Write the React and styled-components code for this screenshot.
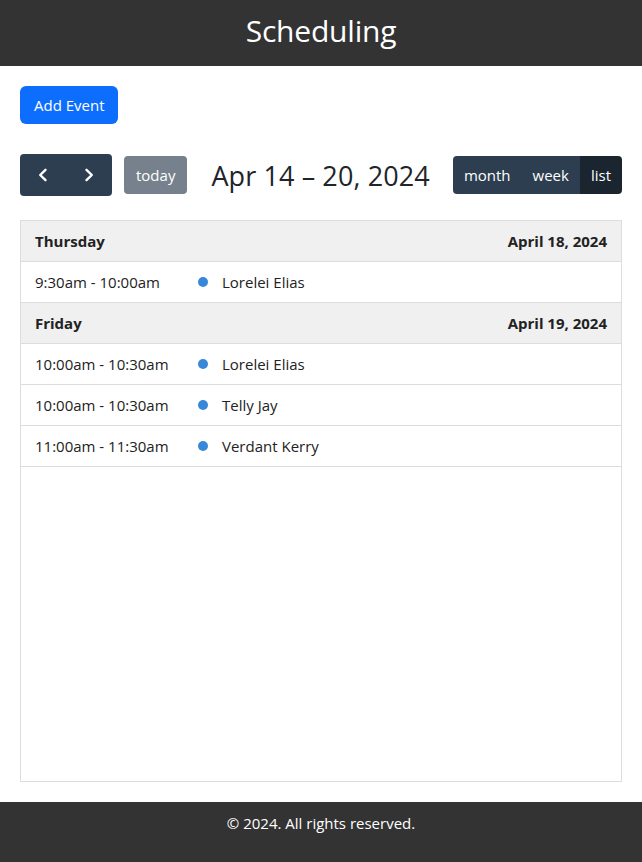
import React from 'react';
import styled, { createGlobalStyle } from 'styled-components';

const GlobalStyle = createGlobalStyle`
  html, body {
    margin: 0;
    padding: 0;
    height: 100%;
  }
  body {
    font-family: 'Open Sans', 'Noto Sans', sans-serif;
    color: #212529;
    background: #fff;
  }
  #root {
    min-height: 100%;
  }
`;

const Page = styled.div`
  display: flex;
  flex-direction: column;
  min-height: 100vh;
`;

const Header = styled.header`
  height: 66px;
  background: #333;
  color: #fff;
  display: flex;
  align-items: center;
  justify-content: center;
`;

const Title = styled.h1`
  margin: 0 0 6px;
  font-size: 30px;
  font-weight: 400;
  letter-spacing: -0.2px;
`;

const Main = styled.main`
  flex: 1;
  display: flex;
  flex-direction: column;
  padding: 20px;
`;

const PrimaryButton = styled.button`
  align-self: flex-start;
  height: 38px;
  padding: 0 13px 1px 14px;
  border: none;
  border-radius: 6px;
  background: #0d6efd;
  color: #fff;
  font-family: inherit;
  font-size: 15px;
`;

const Toolbar = styled.div`
  display: flex;
  align-items: center;
  justify-content: space-between;
  margin-top: 30px;
  margin-bottom: 24px;
`;

const ToolbarChunk = styled.div`
  display: flex;
  align-items: center;
  gap: 12px;
`;

const ButtonGroup = styled.div`
  display: flex;
  border-radius: 4px;
  overflow: hidden;
`;

const CalButton = styled.button`
  height: ${(p) => (p.tall ? '42px' : '38px')};
  padding: 0 ${(p) => (p.tall ? '15px' : '11px')};
  border: none;
  background: ${(p) => (p.active ? '#1a252f' : '#2c3e50')};
  color: #fff;
  font-family: inherit;
  font-size: 15px;
  display: flex;
  align-items: center;
  justify-content: center;
`;

const TodayButton = styled(CalButton)`
  padding: 0 12px;
  background: #76818d;
  border-radius: 4px;
`;

const RangeTitle = styled.h2`
  margin: 0 0 0 12px;
  font-size: 27px;
  font-weight: 400;
  color: #212529;
  letter-spacing: 0.1px;
`;

const List = styled.div`
  flex: 1;
  border: 1px solid #ddd;
`;

const DayRow = styled.div`
  display: flex;
  justify-content: space-between;
  align-items: center;
  height: 40px;
  padding: 0 14px;
  background: #f0f0f0;
  border-bottom: 1px solid #ddd;
  font-weight: 700;
  font-size: 15px;
  color: #222;
`;

const EventRow = styled.div`
  display: flex;
  align-items: center;
  height: 40px;
  padding: 0 14px;
  border-bottom: 1px solid #ddd;
  font-size: 15px;
  color: #222;
`;

const Time = styled.span`
  width: 163px;
`;

const Dot = styled.span`
  width: 10px;
  height: 10px;
  border-radius: 50%;
  background: #3788d8;
  margin-right: 14px;
`;

const Footer = styled.footer`
  height: 60px;
  box-sizing: border-box;
  padding-top: 11px;
  background: #333;
  color: #fff;
  display: flex;
  justify-content: center;
  font-size: 15px;
`;

const Chevron = ({ dir }) => (
  <svg width="16" height="16" viewBox="0 0 16 16" fill="none" stroke="#fff" strokeWidth="2.4" strokeLinecap="round" strokeLinejoin="round">
    {dir === 'left' ? <path d="M10.5 2.8 5.2 8l5.3 5.2" /> : <path d="M5.5 2.8 10.8 8l-5.3 5.2" />}
  </svg>
);

const days = [
  {
    name: 'Thursday',
    date: 'April 18, 2024',
    events: [{ time: '9:30am - 10:00am', title: 'Lorelei Elias' }],
  },
  {
    name: 'Friday',
    date: 'April 19, 2024',
    events: [
      { time: '10:00am - 10:30am', title: 'Lorelei Elias' },
      { time: '10:00am - 10:30am', title: 'Telly Jay' },
      { time: '11:00am - 11:30am', title: 'Verdant Kerry' },
    ],
  },
];

const App = () => {
  return (
    <Page>
      <GlobalStyle />
      <Header>
        <Title>Scheduling</Title>
      </Header>
      <Main>
        <PrimaryButton type="button">Add Event</PrimaryButton>
        <Toolbar>
          <ToolbarChunk>
            <ButtonGroup>
              <CalButton tall type="button" aria-label="prev"><Chevron dir="left" /></CalButton>
              <CalButton tall type="button" aria-label="next"><Chevron dir="right" /></CalButton>
            </ButtonGroup>
            <TodayButton type="button">today</TodayButton>
            <RangeTitle>Apr 14 – 20, 2024</RangeTitle>
          </ToolbarChunk>
          <ButtonGroup>
            <CalButton type="button">month</CalButton>
            <CalButton type="button">week</CalButton>
            <CalButton active type="button">list</CalButton>
          </ButtonGroup>
        </Toolbar>
        <List>
          {days.map((day) => (
            <React.Fragment key={day.name}>
              <DayRow>
                <span>{day.name}</span>
                <span>{day.date}</span>
              </DayRow>
              {day.events.map((ev) => (
                <EventRow key={ev.time + ev.title}>
                  <Time>{ev.time}</Time>
                  <Dot />
                  <span>{ev.title}</span>
                </EventRow>
              ))}
            </React.Fragment>
          ))}
        </List>
      </Main>
      <Footer>© 2024. All rights reserved.</Footer>
    </Page>
  );
};

export default App;
